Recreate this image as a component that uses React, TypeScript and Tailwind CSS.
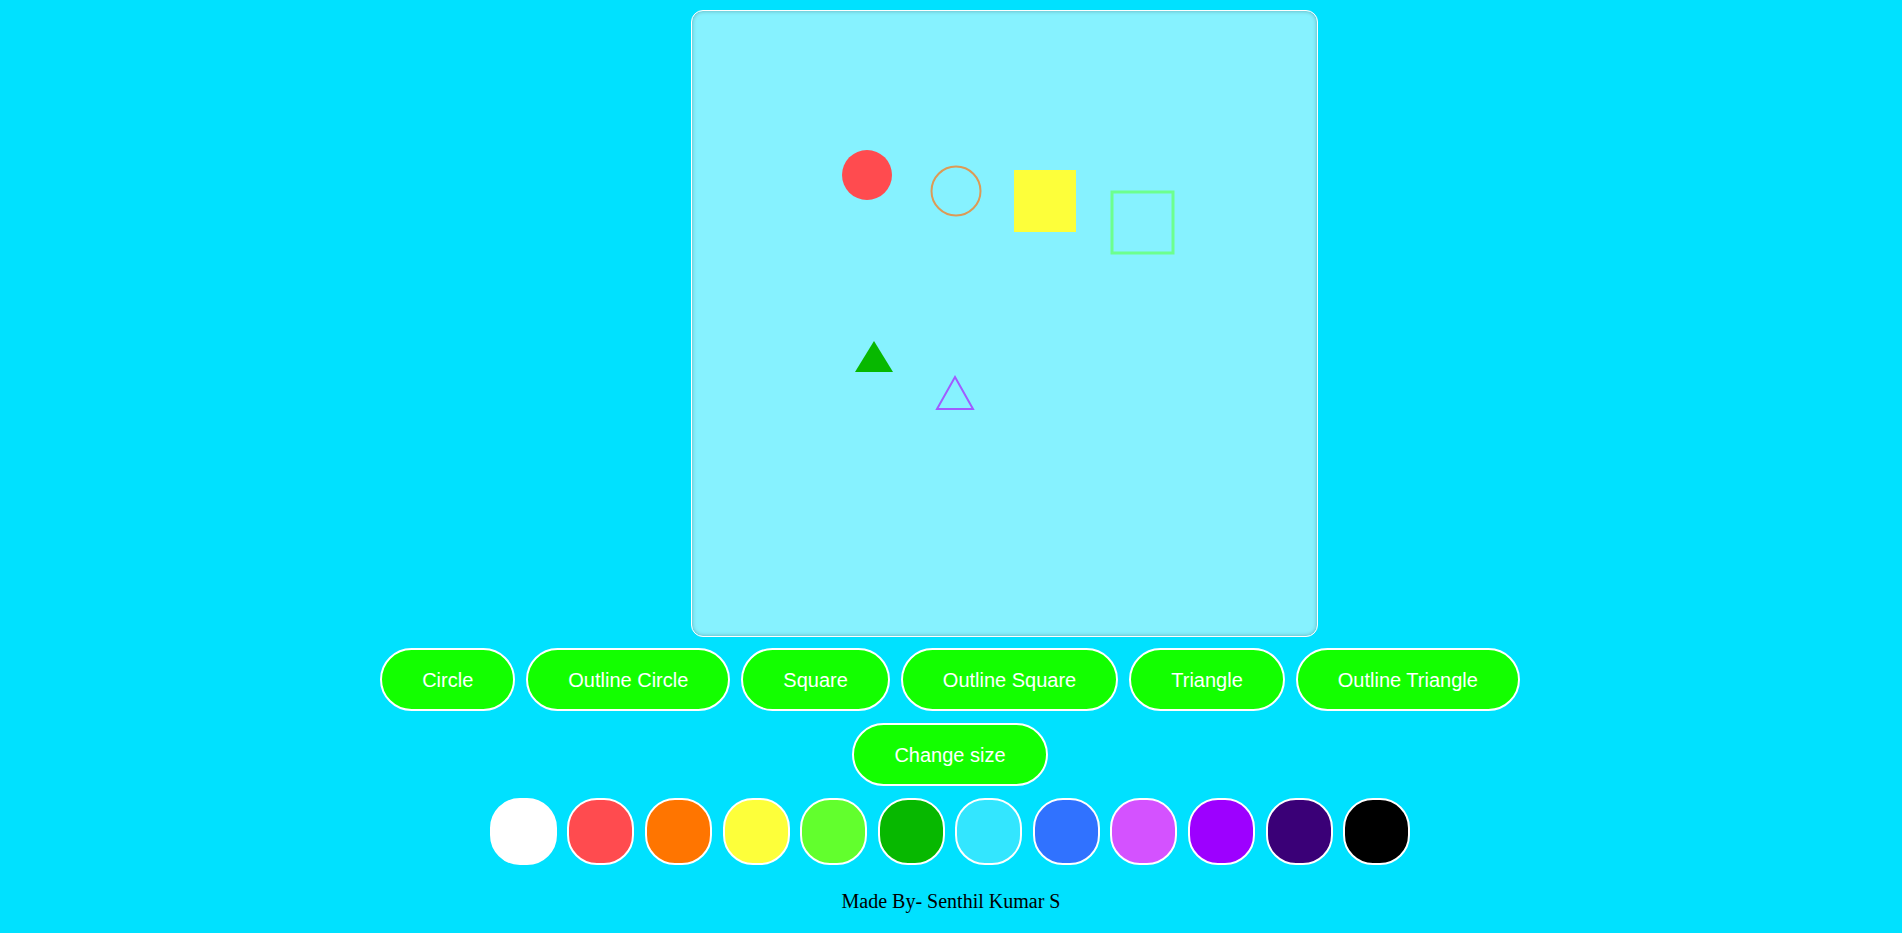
const shapes = ["Circle", "Outline Circle", "Square", "Outline Square", "Triangle", "Outline Triangle"];

const swatches = [
  "bg-[#ffffff] border-white",
  "bg-[#ff4b4f] border-white",
  "bg-[#ff7500] border-white",
  "bg-[#fdff3a] border-white",
  "bg-[#62ff2d] border-white",
  "bg-[#07b800] border-white",
  "bg-[#33e6ff] border-white",
  "bg-[#3072ff] border-white",
  "bg-[#d452ff] border-white",
  "bg-[#9d00ff] border-white",
  "bg-[#3a0077] border-white",
  "bg-[#000000] border-white",
];

function ShapeButton({ label }: { label: string }) {
  return (
    <button className="h-[63px] px-[40px] rounded-full border-2 border-white bg-[#13ff00] text-white text-[20px] font-['Liberation_Sans',Arial,sans-serif]">
      {label}
    </button>
  );
}

export default function App() {
  return (
    <div className="min-h-screen bg-[#00e1ff] pt-[10px] flex flex-col items-center">
      <div className="flex justify-center w-full">
        <div className="ml-[107px] w-[627px] h-[627px] rounded-[12px] border border-white bg-[#86f2ff] shadow-[inset_0_0_4px_rgba(0,0,0,0.3)] overflow-hidden">
          <svg width="625" height="625" viewBox="0 0 625 625">
            <circle cx="175" cy="164" r="25" fill="#ff4b4f" />
            <circle cx="264" cy="180" r="24.5" fill="none" stroke="#dd9a55" strokeWidth="2" />
            <rect x="322" y="159" width="62" height="62" fill="#fdff3a" />
            <rect x="420" y="181" width="61" height="61" fill="none" stroke="#6cff8e" strokeWidth="3" />
            <polygon points="182,330 201,361 163,361" fill="#07b800" />
            <polygon points="263,366 281,398 245,398" fill="none" stroke="#a05cff" strokeWidth="2" />
          </svg>
        </div>
      </div>

      <div className="mt-[11px] mr-[2px] flex gap-[11px]">
        {shapes.map((s) => (
          <ShapeButton key={s} label={s} />
        ))}
      </div>
      <div className="mt-[12px] mr-[2px] flex">
        <ShapeButton label="Change size" />
      </div>

      <div className="mt-[12px] mr-[2px] flex gap-[10.6px]">
        {swatches.map((c, i) => (
          <button key={i} className={`w-[67px] h-[67px] rounded-[30px] border-2 ${c}`} />
        ))}
      </div>

      <p className="mt-[21px] text-[20px] text-black font-['Liberation_Serif','Times_New_Roman',serif]">
        Made By- Senthil Kumar S
      </p>
    </div>
  );
}
